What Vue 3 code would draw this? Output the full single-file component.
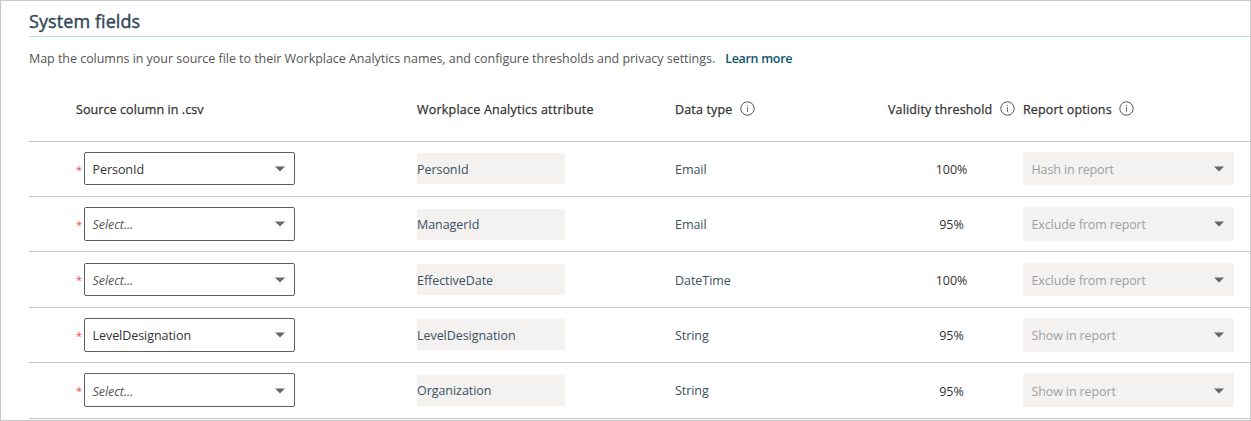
<script setup>
const rows = [
  { source: 'PersonId', attribute: 'PersonId', type: 'Email', threshold: '100%', report: 'Hash in report' },
  { source: '', attribute: 'ManagerId', type: 'Email', threshold: '95%', report: 'Exclude from report' },
  { source: '', attribute: 'EffectiveDate', type: 'DateTime', threshold: '100%', report: 'Exclude from report' },
  { source: 'LevelDesignation', attribute: 'LevelDesignation', type: 'String', threshold: '95%', report: 'Show in report' },
  { source: '', attribute: 'Organization', type: 'String', threshold: '95%', report: 'Show in report' },
]
const headers = [
  { label: 'Source column in .csv', cls: 'h-source' },
  { label: 'Workplace Analytics attribute', cls: 'h-attr' },
  { label: 'Data type', info: true, cls: 'h-type' },
  { label: 'Validity threshold', info: true, cls: 'h-valid' },
  { label: 'Report options', info: true, cls: 'h-report' },
]
</script>

<template>
  <main class="panel">
    <h1 class="title"><span>System fields</span></h1>
    <p class="intro">
      <span class="desc">Map the columns in your source file to their Workplace Analytics names, and configure thresholds and privacy settings.</span>
      <a class="more">Learn more</a>
    </p>
    <div class="grid head">
      <div v-for="h in headers" :key="h.label" class="th" :class="h.cls">
        <span>{{ h.label }}</span>
        <svg v-if="h.info" class="info" width="15" height="15" viewBox="0 0 15 15">
          <circle cx="7.5" cy="7.5" r="6.7" fill="none" stroke="#555" stroke-width="1" />
          <path d="M7.5 6v5M7.5 4v1" stroke="#777" stroke-width="1" fill="none" />
        </svg>
      </div>
    </div>
    <div class="body">
      <div v-for="row in rows" :key="row.attribute" class="grid row">
        <div class="source">
          <span class="star">*</span>
          <div class="select">
            <span :class="row.source ? 'value' : 'placeholder'">{{ row.source || 'Select...' }}</span>
            <svg class="caret" width="10" height="6" viewBox="0 0 10 6"><path d="M0 0.5h10L5 5.5z" fill="#666" /></svg>
          </div>
        </div>
        <div class="attribute"><span>{{ row.attribute }}</span></div>
        <div class="type">{{ row.type }}</div>
        <div class="threshold">{{ row.threshold }}</div>
        <div class="select disabled">
          <span>{{ row.report }}</span>
          <svg class="caret" width="10" height="6" viewBox="0 0 10 6"><path d="M0 0.5h10L5 5.5z" fill="#666" /></svg>
        </div>
      </div>
    </div>
  </main>
</template>

<style>
body { margin: 0; overflow: hidden; }
</style>

<style scoped>
.panel {
  box-sizing: border-box;
  width: 1251px;
  height: 421px;
  padding-left: 28px;
  border: 1px solid #c8c8c8;
  background: #fff;
  overflow: hidden;
  font-family: "Open Sans", "Noto Sans", sans-serif;
  font-size: 12.5px;
  line-height: 20px;
  letter-spacing: -0.05px;
  color: #333;
  white-space: nowrap;
}
.title {
  box-sizing: border-box;
  height: 36px;
  margin: 0;
  padding-top: 7px;
  border-bottom: 1px solid #b3dde8;
  font-size: 18px;
  line-height: 26px;
  font-weight: 400;
  -webkit-text-stroke: 0.4px #324558;
  letter-spacing: 0.08px;
  color: #324558;
}
.intro {
  display: flex;
  height: 43px;
  margin: 0;
  padding-top: 12px;
  gap: 10px;
  color: #555;
}
.desc { letter-spacing: -0.037px; }
.more { font-weight: 600; letter-spacing: -0.3px; color: #0b556a; }
.grid {
  display: grid;
  grid-template-columns: 388px 258px 213px 135px 227px;
}
.head {
  height: 48.6px;
  padding-top: 8px;
  box-sizing: border-box;
  -webkit-text-stroke: 0.25px #333;
  letter-spacing: 0.15px;
  color: #333;
}
.th { display: flex; gap: 7.6px; }
.h-source { padding-left: 47px; letter-spacing: 0.09px; }
.h-attr { letter-spacing: 0.22px; }
.info { margin-top: 0.6px; }
.body { height: 278px; box-sizing: border-box; border-bottom: 1px solid #c6c6c6; }
.row {
  height: 55.4px;
  box-sizing: border-box;
  border-top: 1px solid #c6c6c6;
  align-items: start;
}
.source { display: flex; padding-left: 47px; }
.star {
  width: 8px;
  padding-top: 18px;
  font-size: 11px;
  line-height: 20px;
  color: #e84c4c;
}
.select {
  box-sizing: border-box;
  display: flex;
  justify-content: space-between;
  width: 211px;
  height: 33.7px;
  margin-top: 10.2px;
  padding: 7.2px 9px 0 7.5px;
  border: 1px solid #605e5c;
  border-radius: 2px;
}
.caret { margin-top: 6px; }
.placeholder { font-style: italic; color: #555; }
.disabled { border-color: #f3f2f1; background: #f3f2f1; color: #a19f9d; letter-spacing: -0.12px; }
.attribute {
  box-sizing: border-box;
  width: 148px;
  height: 31px;
  margin-top: 11.6px;
  padding-top: 6.6px;
  background: #f3f2f1;
  color: #3b5060;
}
.type { padding-top: 18.2px; color: #3b5060; }
.threshold { width: 127px; padding-top: 18.4px; text-align: center; }
</style>
